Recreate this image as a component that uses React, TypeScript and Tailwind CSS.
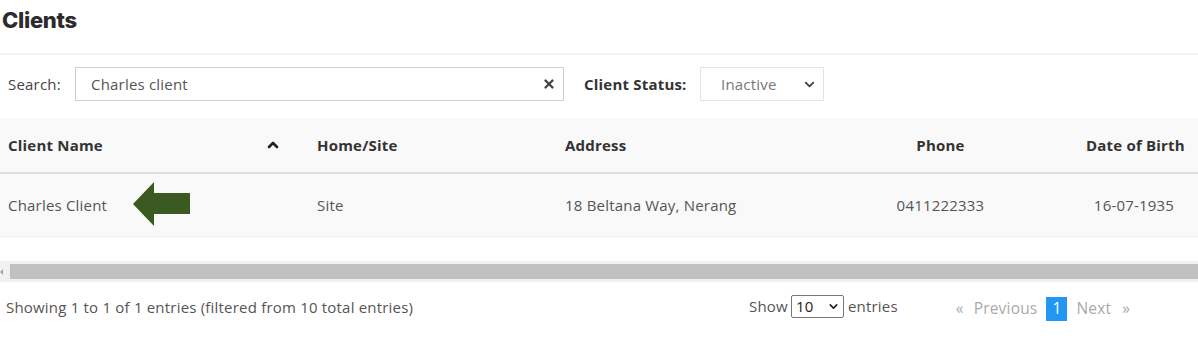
import { ChevronDown, ChevronUp, X } from 'lucide-react';

const font = { fontFamily: '"Open Sans", "Liberation Sans", sans-serif', letterSpacing: '0.2px' };

function GreenArrow() {
  return (
    <svg width="58" height="46" viewBox="0 0 58 46" className="block">
      <polygon points="0,22 21,0 21,11 57,11 57,32 21,32 21,44" fill="#3b5a22" />
    </svg>
  );
}

export default function App() {
  return (
    <div className="w-[1198px] h-[352px] bg-white text-[#555] overflow-hidden" style={font}>
      <h1 className="px-[2px] pt-[4px] h-[53px] text-[22px] font-extrabold text-[#2b2b2b] tracking-[-0.3px]" style={{ fontFamily: 'Inter, "Open Sans", sans-serif' }}>
        Clients
      </h1>

      <div className="border-t-2 border-[#f3f3f3] flex items-center h-[65px] pl-[8px] pb-[5px] text-[15px]">
        <span className="w-[67px] text-[#444]">Search:</span>
        <div className="w-[489px] h-[34px] border border-[#cfcfcf] flex items-center px-[15px] justify-between">
          <span className="text-[#555]">Charles client</span>
          <X className="w-[14px] h-[14px] text-[#444] -mr-[8px]" strokeWidth={4} />
        </div>
        <span className="ml-[20px] w-[116px] font-bold text-[#333]">Client Status:</span>
        <div className="w-[124px] h-[34px] border border-[#e5e5e5] flex items-center justify-between pl-[20px] pr-[6px]">
          <span className="text-[#777]">Inactive</span>
          <ChevronDown className="w-[15px] h-[15px] text-[#444]" strokeWidth={3} />
        </div>
      </div>

      <div className="bg-[#f9f9f9] text-[15px]">
        <div className="grid grid-cols-[309px_248px_312px_143px_186px] h-[56px] items-center border-b-2 border-[#dedede] font-bold text-[#333]">
          <div className="pl-[8px] flex items-center justify-between pr-[28px]">
            <span>Client Name</span>
            <ChevronUp className="w-[16px] h-[16px] text-[#222]" strokeWidth={4} />
          </div>
          <div className="pl-[8px]">Home/Site</div>
          <div className="pl-[8px]">Address</div>
          <div className="text-center">Phone</div>
          <div className="pl-[74px]"><span className="inline-block w-[96px] text-center whitespace-nowrap">Date of Birth</span></div>
        </div>
        <div className="grid grid-cols-[309px_248px_312px_143px_186px] h-[63px] items-center border-b border-[#ececec] text-[#555]">
          <div className="pl-[8px] flex items-center gap-[26px]">
            <span>Charles Client</span>
            <GreenArrow />
          </div>
          <div className="pl-[8px]">Site</div>
          <div className="pl-[8px]">18 Beltana Way, Nerang</div>
          <div className="text-center">0411222333</div>
          <div className="pl-[74px]"><span className="inline-block w-[96px] text-center whitespace-nowrap">16-07-1935</span></div>
        </div>
      </div>

      <div className="mt-[24px] h-[21px] bg-[#f1f1f1] flex items-center">
        <div className="w-[10px] flex items-center">
          <div className="w-0 h-0 border-y-[3px] border-y-transparent border-r-[3px] border-r-[#a3a3a3]" />
        </div>
        <div className="flex-1 h-[15px] bg-[#c1c1c1]" />
      </div>

      <div className="flex items-center h-[50px] text-[15px]">
        <div className="pl-[6px] w-[749px] text-[#555] whitespace-nowrap">Showing 1 to 1 of 1 entries (filtered from 10 total entries)</div>
        <div className="flex items-center text-[#555] -mt-[2px]">
          <span>Show</span>
          <div className="ml-[3px] w-[53px] h-[23px] border border-[#777] rounded-[2px] flex items-center justify-between pl-[4px] pr-[3px] text-[#222]">
            <span>10</span>
            <ChevronDown className="w-[13px] h-[13px]" strokeWidth={3} />
          </div>
          <span className="ml-[4px]">entries</span>
        </div>
        <div className="ml-[58px] mt-[4px] flex items-center text-[#aaa] text-[15.5px]">
          <span>«</span>
          <span className="ml-[10px]">Previous</span>
          <span className="ml-[9px] w-[21px] h-[24px] bg-[#2196f3] text-white flex items-center justify-center">1</span>
          <span className="ml-[9px]">Next</span>
          <span className="ml-[11px]">»</span>
        </div>
      </div>
    </div>
  );
}
